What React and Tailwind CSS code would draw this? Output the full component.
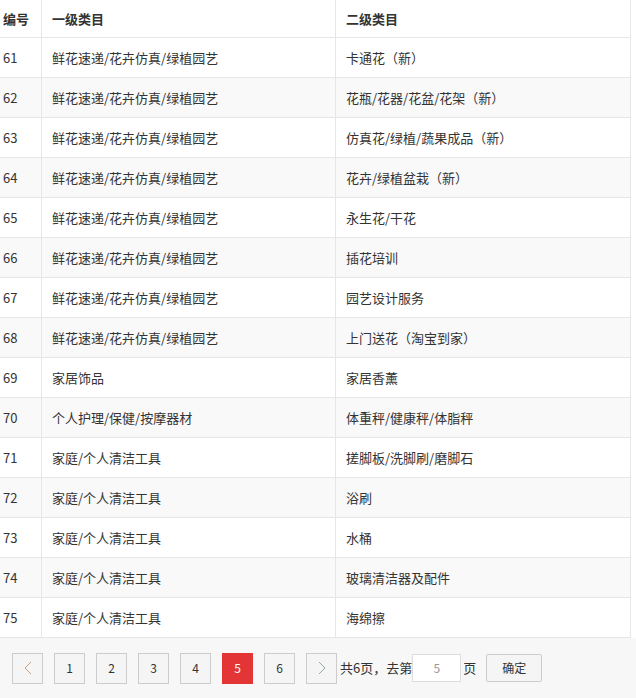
import React from 'react';

const rows = [
  ['61', '鲜花速递/花卉仿真/绿植园艺', '卡通花（新）'],
  ['62', '鲜花速递/花卉仿真/绿植园艺', '花瓶/花器/花盆/花架（新）'],
  ['63', '鲜花速递/花卉仿真/绿植园艺', '仿真花/绿植/蔬果成品（新）'],
  ['64', '鲜花速递/花卉仿真/绿植园艺', '花卉/绿植盆栽（新）'],
  ['65', '鲜花速递/花卉仿真/绿植园艺', '永生花/干花'],
  ['66', '鲜花速递/花卉仿真/绿植园艺', '插花培训'],
  ['67', '鲜花速递/花卉仿真/绿植园艺', '园艺设计服务'],
  ['68', '鲜花速递/花卉仿真/绿植园艺', '上门送花（淘宝到家）'],
  ['69', '家居饰品', '家居香薰'],
  ['70', '个人护理/保健/按摩器材', '体重秤/健康秤/体脂秤'],
  ['71', '家庭/个人清洁工具', '搓脚板/洗脚刷/磨脚石'],
  ['72', '家庭/个人清洁工具', '浴刷'],
  ['73', '家庭/个人清洁工具', '水桶'],
  ['74', '家庭/个人清洁工具', '玻璃清洁器及配件'],
  ['75', '家庭/个人清洁工具', '海绵擦'],
];

const font = { fontFamily: '"Noto Sans CJK SC", "Noto Sans", sans-serif' };

export default function App() {
  return (
    <div className="w-[636px] h-[698px] bg-white text-[13px] text-[#333] overflow-hidden" style={font}>
      <div className="w-[631px] border-r border-[#e6e6e6]">
        <div className="flex h-[38px] items-center border-b border-[#e6e6e6] font-bold">
          <div className="w-[42px] h-full flex items-center pl-[3px] border-r border-[#e6e6e6]">编号</div>
          <div className="w-[294px] h-full flex items-center pl-[10px] border-r border-[#e6e6e6]">一级类目</div>
          <div className="flex-1 h-full flex items-center pl-[10px]">二级类目</div>
        </div>
        {rows.map((r, i) => (
          <div key={r[0]} className={`flex h-[40px] items-center border-b border-[#e6e6e6] ${i % 2 ? 'bg-[#f9f9f9]' : 'bg-white'}`}>
            <div className="w-[42px] h-full flex items-center pl-[3px] border-r border-[#e6e6e6]">{r[0]}</div>
            <div className="w-[294px] h-full flex items-center pl-[10px] border-r border-[#e6e6e6]">{r[1]}</div>
            <div className="flex-1 h-full flex items-center pl-[10px]">{r[2]}</div>
          </div>
        ))}
      </div>
      <div className="bg-[#f7f7f7] h-[60px] flex items-center pl-[12px] gap-[11px]">
        <button className="w-[31px] h-[31px] border border-[#ccc] bg-[#f5f5f5] text-[#aaa] flex items-center justify-center">
          <svg width="8" height="14" viewBox="0 0 8 14" fill="none" stroke="#c8a080" strokeWidth="1"><path d="M7 1 1 7l6 6" /></svg>
        </button>
        {['1', '2', '3', '4', '5', '6'].map((n) => (
          <button key={n} className={`w-[31px] h-[31px] border flex items-center justify-center text-[12px] ${n === '5' ? 'bg-[#e33535] border-[#e33535] text-white' : 'bg-[#f5f5f5] border-[#ccc] text-[#333]'}`}>{n}</button>
        ))}
        <button className="w-[31px] h-[31px] border border-[#ccc] bg-[#f5f5f5] flex items-center justify-center">
          <svg width="8" height="14" viewBox="0 0 8 14" fill="none" stroke="#8aa" strokeWidth="1"><path d="M1 1l6 6-6 6" /></svg>
        </button>
        <div className="flex items-center -ml-[8px] text-[13px]">
          <span>共6页，去第</span>
          <div className="w-[49px] h-[28px] bg-white border border-[#ddd] flex items-center justify-center text-[#999] text-[12px]">5</div>
          <span className="ml-[2px]">页</span>
          <button className="ml-[10px] w-[56px] h-[28px] border border-[#ccc] bg-[#f5f5f5] rounded-[2px] text-[12px]">确定</button>
        </div>
      </div>
    </div>
  );
}
